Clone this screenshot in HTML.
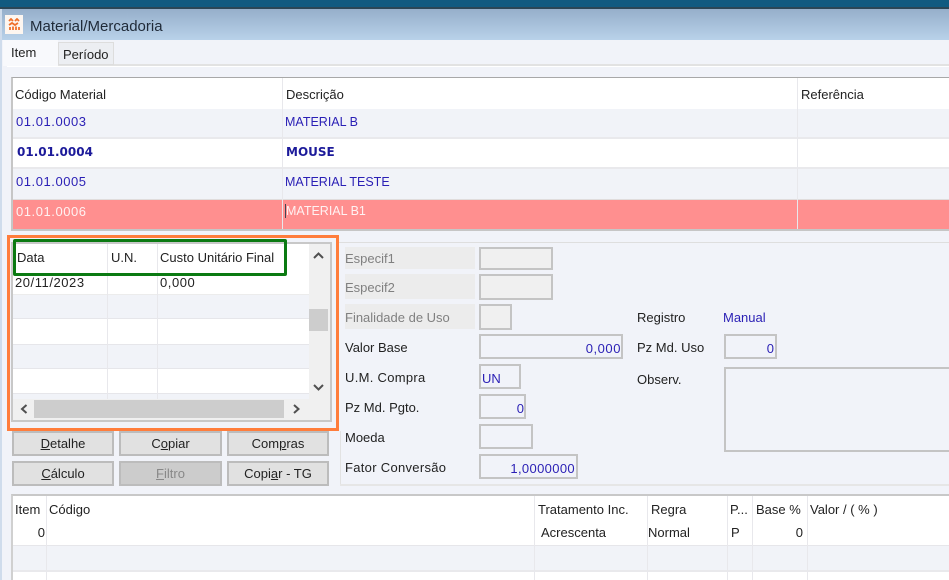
<!DOCTYPE html>
<html><head><meta charset="utf-8"><style>
html,body{margin:0;padding:0;width:949px;height:580px;overflow:hidden;background:#f1f3f9}
#r{position:relative;width:949px;height:580px;overflow:hidden;font-family:"Liberation Sans",sans-serif;font-size:13px;color:#222;filter:blur(.35px)}
#r div{position:absolute;box-sizing:border-box}
.t{line-height:16px;height:16px;white-space:nowrap;margin-top:1px}
.b{color:#2a1fb5}
.n{letter-spacing:.55px}
.g{color:#808080}
.i{background:#f1f3f9;border:2px solid #c4c4c4}
.dis{background:#f0f0f0}
.lb{background:#ececec}
.btn{background:#e1e1e1;border:2px solid #bcbcbc;text-align:center;line-height:21px;color:#222}
.wl{background:#e8e8ec;width:1px}
u{text-decoration-thickness:1px}
</style></head><body><div id="r">
<div style="left:0;top:0;width:949px;height:8px;background:#115a80"></div>
<div style="left:0;top:7px;width:949px;height:2px;background:#2b4656"></div>
<div style="left:0;top:9px;width:949px;height:31px;background:linear-gradient(#96afcb,#b9d2ea)"></div>
<div style="left:0;top:9px;width:2px;height:571px;background:#cfdcec"></div>
<div style="left:5px;top:15px;width:18px;height:19px;background:#fdf6f0"></div>
<svg style="position:absolute;left:8px;top:18px" width="12" height="13" viewBox="0 0 12 13"><path d="M1 3l2-2 2 2M7 3l2-2 2 2M1 7l3-2 3 2 3-2M2 12V9M5 12V8.500M8 12V8.500M11 12V9" fill="none" stroke="#f0702a" stroke-width="1.800"/></svg>
<div class="t" style="left:30px;top:18px;font-size:15px;color:#1f2a38">Material/Mercadoria</div>

<div style="left:58px;top:64px;width:891px;height:2px;background:#e2e2e2"></div>
<div style="left:7px;top:66px;width:942px;height:1px;background:#fff"></div>
<div style="left:3px;top:40px;width:55px;height:26px;background:#f8f9fc"></div>
<div style="left:58px;top:42px;width:56px;height:23px;background:#eceef2;border:1px solid #ddd"></div>
<div class="t" style="left:11px;top:44px">Item</div>
<div class="t" style="left:63px;top:46px">Período</div>

<!-- top grid -->
<div style="left:11px;top:77px;width:938px;height:154px;background:#fff;border-top:1px solid #a8a8a8;border-left:2px solid #c6c6c6;border-bottom:2px solid #c6c6c6"></div>
<div style="left:13px;top:109px;width:936px;height:30px;background:#f1f3f8;border-bottom:2px solid #e9e9ec"></div>
<div style="left:13px;top:139px;width:936px;height:30px;background:#fff;border-bottom:2px solid #e9e9ec"></div>
<div style="left:13px;top:169px;width:936px;height:30px;background:#f1f3f8"></div>
<div style="left:13px;top:199px;width:936px;height:30px;background:#ff8f8f;border-top:1px solid #e0dcdc"></div>
<div class="wl" style="left:282px;top:78px;height:151px"></div>
<div class="wl" style="left:797px;top:78px;height:151px"></div>
<div class="t" style="left:15px;top:86px">Código Material</div>
<div class="t" style="left:286px;top:86px">Descrição</div>
<div class="t" style="left:801px;top:86px">Referência</div>
<div class="t b n" style="left:16px;top:113px">01.01.0003</div>
<div class="t b" style="left:285px;top:113px;font-size:12.500px">MATERIAL B</div>
<div class="t" style="left:17px;top:143px;font:bold 12px/16px 'DejaVu Sans',sans-serif;color:#1c1a9a">01.01.0004</div>
<div class="t" style="left:286px;top:143px;font:bold 12px/16px 'DejaVu Sans',sans-serif;color:#1c1a9a">MOUSE</div>
<div class="t b n" style="left:16px;top:173px">01.01.0005</div>
<div class="t b" style="left:285px;top:173px;font-size:12.500px">MATERIAL TESTE</div>
<div class="t n" style="left:16px;top:203px;color:#fff2f2">01.01.0006</div>
<div class="t" style="left:286px;top:202px;font-size:12.500px;color:#fff2f2">MATERIAL B1</div>
<div style="left:285px;top:204px;width:1px;height:14px;background:#445"></div>

<!-- inner grid -->
<div style="left:11px;top:242px;width:321px;height:180px;background:#fff;border:2px solid #c8c8c8"></div>
<div style="left:13px;top:294px;width:296px;height:25px;background:#f1f3f8;border-top:1px solid #ececec;border-bottom:1px solid #e6e6ea"></div>
<div style="left:13px;top:344px;width:296px;height:25px;background:#f1f3f8;border-top:1px solid #e6e6ea;border-bottom:1px solid #e6e6ea"></div>
<div style="left:13px;top:393px;width:296px;height:6px;background:#f1f3f8;border-top:1px solid #e6e6ea"></div>
<div class="wl" style="left:107px;top:244px;height:155px"></div>
<div class="wl" style="left:157px;top:244px;height:155px"></div>
<div class="t n" style="left:15px;top:274px">20/11/2023</div>
<div class="t n" style="left:160px;top:274px">0,000</div>
<div class="t" style="left:17px;top:249px">Data</div>
<div class="t" style="left:111px;top:249px">U.N.</div>
<div class="t" style="left:160px;top:249px">Custo Unitário Final</div>
<div style="left:309px;top:244px;width:21px;height:155px;background:#f0f0f0"></div>
<div style="left:309px;top:309px;width:19px;height:22px;background:#cdcdcd"></div>
<div style="left:13px;top:399px;width:317px;height:21px;background:#f0f0f0"></div>
<div style="left:34px;top:400px;width:250px;height:18px;background:#cdcdcd"></div>
<svg style="position:absolute;left:0;top:0" width="349" height="430"><path d="M314 258l4.500-4.500 4.500 4.500M314 385l4.500 4.500 4.500-4.500M26.500 405l-4.500 4 4.500 4M294 405l4.500 4-4.500 4" fill="none" stroke="#505050" stroke-width="2"/></svg>
<div style="left:7px;top:235px;width:332px;height:196px;border:3px solid #ff7d3c"></div>
<div style="left:13px;top:239px;width:274px;height:37px;border:3px solid #0b7a12;border-radius:2px"></div>

<!-- buttons -->
<div class="btn" style="left:12px;top:431px;width:102px;height:25px"><u>D</u>etalhe</div>
<div class="btn" style="left:119px;top:431px;width:103px;height:25px">C<u>o</u>piar</div>
<div class="btn" style="left:227px;top:431px;width:102px;height:25px">Com<u>p</u>ras</div>
<div class="btn" style="left:12px;top:461px;width:102px;height:25px"><u>C</u>álculo</div>
<div class="btn" style="left:119px;top:461px;width:103px;height:25px;background:#ccc;color:#888"><u>F</u>iltro</div>
<div class="btn" style="left:227px;top:461px;width:102px;height:25px">Copi<u>a</u>r - TG</div>

<!-- form panel -->
<div style="left:339px;top:242px;width:610px;height:1px;background:#dedede"></div>
<div style="left:340px;top:431px;width:1px;height:55px;background:#e2e2e2"></div>
<div style="left:340px;top:484px;width:609px;height:2px;background:#e6e6e6"></div>
<div class="lb" style="left:345px;top:247px;width:130px;height:22px"></div>
<div class="lb" style="left:345px;top:274px;width:130px;height:25px"></div>
<div class="lb" style="left:345px;top:304px;width:130px;height:25px"></div>
<div class="t g" style="left:345px;top:250px">Especif1</div>
<div class="t g" style="left:345px;top:279px">Especif2</div>
<div class="t g" style="left:345px;top:309px">Finalidade de Uso</div>
<div class="t" style="left:345px;top:339px">Valor Base</div>
<div class="t" style="left:345px;top:369px;letter-spacing:.3px">U.M. Compra</div>
<div class="t" style="left:345px;top:399px">Pz Md. Pgto.</div>
<div class="t" style="left:345px;top:429px">Moeda</div>
<div class="t" style="left:345px;top:459px;letter-spacing:.3px">Fator Conversão</div>
<div class="i dis" style="left:479px;top:247px;width:74px;height:23px"></div>
<div class="i dis" style="left:479px;top:274px;width:74px;height:26px"></div>
<div class="i dis" style="left:479px;top:304px;width:33px;height:26px"></div>
<div class="i" style="left:479px;top:334px;width:144px;height:25px"></div>
<div class="t b n" style="left:479px;top:340px;width:142px;text-align:right">0,000</div>
<div class="i" style="left:479px;top:364px;width:42px;height:25px"></div>
<div class="t b" style="left:482px;top:370px">UN</div>
<div class="i" style="left:479px;top:394px;width:47px;height:25px"></div>
<div class="t b" style="left:479px;top:400px;width:45px;text-align:right">0</div>
<div class="i" style="left:479px;top:424px;width:54px;height:25px"></div>
<div class="i" style="left:479px;top:454px;width:99px;height:25px"></div>
<div class="t b" style="left:479px;top:460px;width:96px;text-align:right;letter-spacing:.35px">1,0000000</div>
<div class="t" style="left:637px;top:309px">Registro</div>
<div class="t b" style="left:723px;top:309px">Manual</div>
<div class="t" style="left:637px;top:339px">Pz Md. Uso</div>
<div class="i" style="left:724px;top:334px;width:53px;height:25px"></div>
<div class="t b" style="left:724px;top:340px;width:50px;text-align:right">0</div>
<div class="t" style="left:637px;top:371px">Observ.</div>
<div class="i" style="left:724px;top:367px;width:240px;height:85px"></div>

<!-- bottom grid -->
<div style="left:11px;top:494px;width:938px;height:86px;background:#fff;border-top:2px solid #c8c8c8;border-left:2px solid #d0d0d0"></div>
<div style="left:13px;top:545px;width:936px;height:27px;background:#f1f3f8;border-top:1px solid #e6e6ea;border-bottom:2px solid #e9e9ec"></div>
<div class="wl" style="left:46px;top:496px;height:84px"></div>
<div class="wl" style="left:534px;top:496px;height:84px"></div>
<div class="wl" style="left:647px;top:496px;height:84px"></div>
<div class="wl" style="left:727px;top:496px;height:84px"></div>
<div class="wl" style="left:752px;top:496px;height:84px"></div>
<div class="wl" style="left:807px;top:496px;height:84px"></div>
<div class="t" style="left:15px;top:501px">Item</div>
<div class="t" style="left:49px;top:501px">Código</div>
<div class="t" style="left:538px;top:501px">Tratamento Inc.</div>
<div class="t" style="left:651px;top:501px">Regra</div>
<div class="t" style="left:730px;top:501px">P...</div>
<div class="t" style="left:756px;top:501px">Base %</div>
<div class="t" style="left:810px;top:501px">Valor / ( % )</div>
<div class="t" style="left:20px;top:524px;width:25px;text-align:right">0</div>
<div class="t" style="left:541px;top:524px">Acrescenta</div>
<div class="t" style="left:648px;top:524px">Normal</div>
<div class="t" style="left:731px;top:524px">P</div>
<div class="t" style="left:760px;top:524px;width:43px;text-align:right">0</div>
</div></body></html>
